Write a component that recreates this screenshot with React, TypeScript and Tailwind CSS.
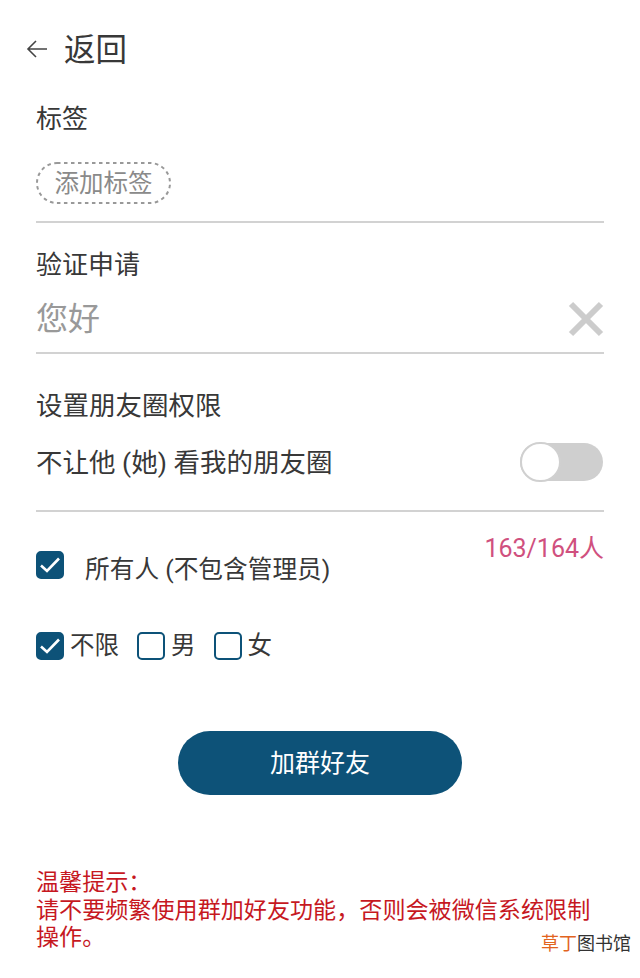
import React from "react";

const CheckBox = ({ checked = false }: { checked?: boolean }) => (
  <span
    className={`flex h-[28px] w-[28px] shrink-0 items-center justify-center rounded-[5px] border-2 border-[#0d5278] ${
      checked ? "bg-[#0d5278]" : "bg-white"
    }`}
  >
    {checked && (
      <svg width="24" height="24" viewBox="0 0 24 24" fill="none">
        <path d="M3 12.5 L9 18 L21 5.5" stroke="#ffffff" strokeWidth="2.6" />
      </svg>
    )}
  </span>
);

const App = () => {
  return (
    <div className="relative h-[978px] w-[640px] overflow-hidden bg-white font-['Roboto','Noto_Sans_CJK_SC',sans-serif] text-[#383838]">
      <div className="flex h-[101px] items-start pl-[26px] pt-[32px]">
        <svg width="22" height="20" viewBox="0 0 22 20" fill="none" className="mt-[7px]">
          <path d="M21 10 H2 M10 2 L2 10 L10 18" stroke="#444444" strokeWidth="1.6" />
        </svg>
        <span className="ml-[16px] text-[31.5px] leading-[38px]">返回</span>
      </div>

      <div className="px-[36px]">
        <div className="border-b-2 border-[#d2d2d2] pb-[17px]">
          <div className="text-[26px] leading-[36px]">标签</div>
          <div className="relative mt-[25px] flex h-[42px] w-[135px] items-center justify-center pt-[2px] text-[24.5px] text-[#8a8a8a]">
            <svg width="135" height="42" viewBox="0 0 135 42" fill="none" className="absolute left-0 top-0">
              <rect x="1" y="1" width="133" height="40" rx="20" stroke="#999999" strokeWidth="2" strokeDasharray="3.5 3.5" />
            </svg>
            添加标签
          </div>
        </div>

        <div className="mt-[24px] text-[26px] leading-[36px]">验证申请</div>
        <div className="flex h-[71px] items-center justify-between border-b-2 border-[#d2d2d2] pt-[3px]">
          <span className="text-[32px] text-[#999999]">您好</span>
          <svg width="36" height="36" viewBox="0 0 36 36" fill="none">
            <path d="M3 3 L33 33 M33 3 L3 33" stroke="#cccccc" strokeWidth="6" />
          </svg>
        </div>

        <div className="mt-[34px] text-[26.5px] leading-[36px]">设置朋友圈权限</div>
        <div className="mt-[19px] flex items-center justify-between">
          <span className="pt-[2px] text-[26.5px] leading-[36px]">不让他 (她) 看我的朋友圈</span>
          <span className="relative mr-[1px] h-[38px] w-[83px] rounded-full bg-[#cfcfcf]">
            <span className="absolute left-0 top-[-1px] h-[40px] w-[41px] rounded-full border-2 border-[#d0d0d0] bg-white" />
          </span>
        </div>
        <div className="mt-[29px] border-b-2 border-[#d2d2d2]" />

        <div className="relative mt-[39px] flex items-start">
          <CheckBox checked />
          <span className="ml-[21px] mt-[1px] text-[24.7px] leading-[36px]">所有人 (不包含管理员)</span>
          <span className="absolute right-0 top-[-20px] text-[25px] leading-[36px] text-[#d0507e]">163/164人</span>
        </div>

        <div className="mt-[40px] flex items-center text-[24.5px] leading-[36px]">
          <CheckBox checked />
          <span className="ml-[6px]">不限</span>
          <span className="ml-[18px]"><CheckBox /></span>
          <span className="ml-[6px]">男</span>
          <span className="ml-[18px]"><CheckBox /></span>
          <span className="ml-[6px]">女</span>
        </div>

        <div className="mt-[67px] flex justify-center">
          <button className="h-[64px] w-[284px] rounded-full bg-[#0d5278] pt-[2px] text-[25px] text-white">加群好友</button>
        </div>

        <div className="mt-[74px] text-[23.1px] leading-[27.5px] text-[#c6181f]">
          <div>温馨提示：</div>
          <div>请不要频繁使用群加好友功能，否则会被微信系统限制</div>
          <div className="w-fit">操作。</div>
        </div>
      </div>

      <div className="absolute left-[541px] top-[933px] text-[18px] leading-[22px]">
        <span className="text-[#e2641f]">草丁</span>
        <span className="text-[#333333]">图书馆</span>
      </div>
    </div>
  );
};

export default App;
